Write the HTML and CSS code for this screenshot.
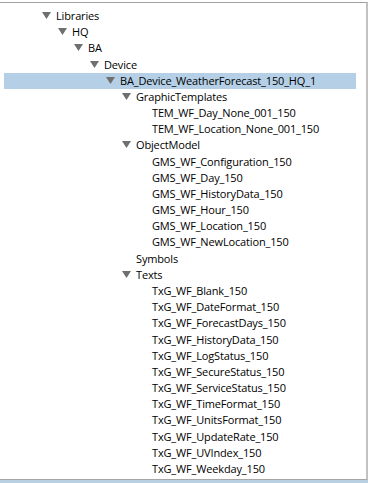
FILE: index.html
```html
<!DOCTYPE html>
<html>
<head>
<meta charset="utf-8">
<link rel="stylesheet" href="styles.css">
</head>
<body>
<div class="frame">
  <div class="tree">
    <div class="row lv0"><span class="tog"><svg viewBox="0 0 9 7"><polygon points="0,0 9,0 4.5,7"/></svg></span><span class="lbl">Libraries</span></div>
    <div class="row lv1"><span class="tog"><svg viewBox="0 0 9 7"><polygon points="0,0 9,0 4.5,7"/></svg></span><span class="lbl">HQ</span></div>
    <div class="row lv2"><span class="tog"><svg viewBox="0 0 9 7"><polygon points="0,0 9,0 4.5,7"/></svg></span><span class="lbl">BA</span></div>
    <div class="row lv3"><span class="tog"><svg viewBox="0 0 9 7"><polygon points="0,0 9,0 4.5,7"/></svg></span><span class="lbl">Device</span></div>
    <div class="row lv4 sel"><span class="tog"><svg viewBox="0 0 9 7"><polygon points="0,0 9,0 4.5,7"/></svg></span><span class="lbl">BA_Device_WeatherForecast_150_HQ_1</span></div>
    <div class="row lv5"><span class="tog"><svg viewBox="0 0 9 7"><polygon points="0,0 9,0 4.5,7"/></svg></span><span class="lbl">GraphicTemplates</span></div>
    <div class="row lv6"><span class="tog"></span><span class="lbl">TEM_WF_Day_None_001_150</span></div>
    <div class="row lv6"><span class="tog"></span><span class="lbl">TEM_WF_Location_None_001_150</span></div>
    <div class="row lv5"><span class="tog"><svg viewBox="0 0 9 7"><polygon points="0,0 9,0 4.5,7"/></svg></span><span class="lbl">ObjectModel</span></div>
    <div class="row lv6"><span class="tog"></span><span class="lbl">GMS_WF_Configuration_150</span></div>
    <div class="row lv6"><span class="tog"></span><span class="lbl">GMS_WF_Day_150</span></div>
    <div class="row lv6"><span class="tog"></span><span class="lbl">GMS_WF_HistoryData_150</span></div>
    <div class="row lv6"><span class="tog"></span><span class="lbl">GMS_WF_Hour_150</span></div>
    <div class="row lv6"><span class="tog"></span><span class="lbl">GMS_WF_Location_150</span></div>
    <div class="row lv6"><span class="tog"></span><span class="lbl">GMS_WF_NewLocation_150</span></div>
    <div class="row lv5"><span class="tog"></span><span class="lbl">Symbols</span></div>
    <div class="row lv5"><span class="tog"><svg viewBox="0 0 9 7"><polygon points="0,0 9,0 4.5,7"/></svg></span><span class="lbl">Texts</span></div>
    <div class="row lv6"><span class="tog"></span><span class="lbl">TxG_WF_Blank_150</span></div>
    <div class="row lv6"><span class="tog"></span><span class="lbl">TxG_WF_DateFormat_150</span></div>
    <div class="row lv6"><span class="tog"></span><span class="lbl">TxG_WF_ForecastDays_150</span></div>
    <div class="row lv6"><span class="tog"></span><span class="lbl">TxG_WF_HistoryData_150</span></div>
    <div class="row lv6"><span class="tog"></span><span class="lbl">TxG_WF_LogStatus_150</span></div>
    <div class="row lv6"><span class="tog"></span><span class="lbl">TxG_WF_SecureStatus_150</span></div>
    <div class="row lv6"><span class="tog"></span><span class="lbl">TxG_WF_ServiceStatus_150</span></div>
    <div class="row lv6"><span class="tog"></span><span class="lbl">TxG_WF_TimeFormat_150</span></div>
    <div class="row lv6"><span class="tog"></span><span class="lbl">TxG_WF_UnitsFormat_150</span></div>
    <div class="row lv6"><span class="tog"></span><span class="lbl">TxG_WF_UpdateRate_150</span></div>
    <div class="row lv6"><span class="tog"></span><span class="lbl">TxG_WF_UVIndex_150</span></div>
    <div class="row lv6"><span class="tog"></span><span class="lbl">TxG_WF_Weekday_150</span></div>
  </div>
</div>
<div class="strip"></div>
</body>
</html>
```
FILE: styles.css
```css
html, body {
  margin: 0;
  padding: 0;
  background: #ffffff;
  width: 368px;
  height: 483px;
  overflow: hidden;
}
.frame {
  margin-top: 2px;
  height: 476px;
  border-top: 1px solid #a2a2a2;
  border-right: 2px solid #c2c2c2;
  border-bottom: 1px solid #a6a6a6;
  background: #ffffff;
  box-sizing: content-box;
  width: 366px;
}
.strip {
  height: 3px;
  background: #b9cfe2;
}
.tree {
  padding-top: 5px;
  display: flex;
  flex-direction: column;
  font-family: "Open Sans", "Noto Sans", sans-serif;
  font-size: 11px;
  letter-spacing: -0.15px;
  color: #000000;
}
.row {
  display: flex;
  align-items: center;
  height: 16.18px;
  margin: 0 10px 0 4px;
  white-space: nowrap;
}
.sel {
  background: #b5d0e6;
}
.tog {
  width: 16px;
  flex: none;
  display: flex;
  align-items: center;
}
.tog svg {
  width: 9px;
  height: 7px;
  margin-left: 1.5px;
  margin-top: -1px;
  fill: #6f6f6f;
}
.lbl {
  line-height: 16px;
}
.lv0 { padding-left: 36px; }
.lv1 { padding-left: 52px; }
.lv2 { padding-left: 68px; }
.lv3 { padding-left: 84px; }
.lv4 { padding-left: 100px; }
.lv5 { padding-left: 116px; }
.lv6 { padding-left: 132px; }
```
